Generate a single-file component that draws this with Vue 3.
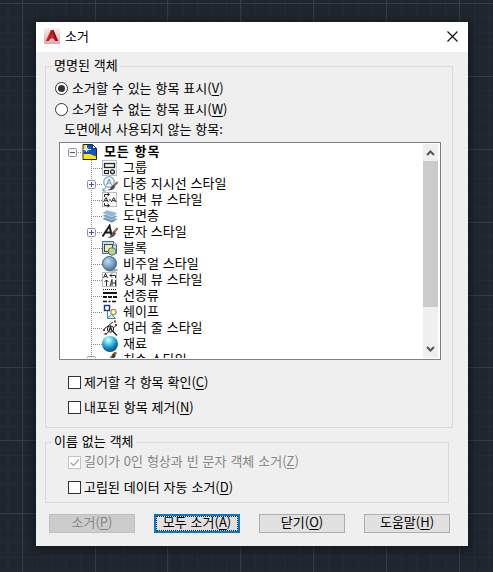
<script setup>
const tree = [
  { label: '그룹', icon: 'group' },
  { label: '다중 지시선 스타일', icon: 'mleader', expandable: true },
  { label: '단면 뷰 스타일', icon: 'section' },
  { label: '도면층', icon: 'layers' },
  { label: '문자 스타일', icon: 'text', expandable: true },
  { label: '블록', icon: 'block' },
  { label: '비주얼 스타일', icon: 'visual' },
  { label: '상세 뷰 스타일', icon: 'detail' },
  { label: '선종류', icon: 'linetype' },
  { label: '쉐이프', icon: 'shape' },
  { label: '여러 줄 스타일', icon: 'mline' },
  { label: '재료', icon: 'material' },
  { label: '치수 스타일', icon: 'dim', expandable: true },
]
const buttons = [
  { label: '소거', key: 'P', state: 'disabled' },
  { label: '모두 소거', key: 'A', state: 'focused' },
  { label: '닫기', key: 'O', state: '' },
  { label: '도움말', key: 'H', state: '' },
]
</script>

<template>
  <main class="canvas">
    <svg class="grid" width="493" height="572">
      <defs>
        <pattern id="minor" x="22" y="3" width="14.58" height="14.58" patternUnits="userSpaceOnUse">
          <path d="M.5 0V14.6M0 .5H14.6" stroke="#242b34" fill="none" />
        </pattern>
      </defs>
      <rect width="493" height="572" fill="#20262f" />
      <rect width="493" height="572" fill="url(#minor)" />
      <path d="M22.5 0V572M95.5 0V572M167.5 0V572M240.5 0V572M313.5 0V572M386.5 0V572M459.5 0V572M0 3.5H493M0 76.5H493M0 149.5H493M0 222.5H493M0 295.5H493M0 367.5H493M0 440.5H493M0 513.5H493" stroke="#343c45" />
    </svg>
    <section class="dialog">
      <header class="titlebar">
        <svg class="logo" width="16" height="16" viewBox="0 0 16 16">
          <defs>
            <linearGradient id="lg" x1="0" y1="0" x2="0" y2="1"><stop stop-color="#f4f1f1" /><stop offset="1" stop-color="#dda9ad" /></linearGradient>
          </defs>
          <rect width="16" height="16" fill="url(#lg)" />
          <path d="M7 2H9.5L14 13H11L9.5 10.5H6.3L4.8 13H2Z" fill="#b71920" />
          <path d="M7 2L5.5 8 2.5 13H2ZM8.2 5.5L9.8 9.5H6.8Z" fill="#d8332f" />
          <path d="M9.5 2L14 13H12L8.5 4Z" fill="#8f1118" />
        </svg>
        <h1>소거</h1>
        <svg class="close" width="11" height="11" viewBox="0 0 11 11"><path d="M.5 .5L10.5 10.5M10.5 .5L.5 10.5" stroke="#111" stroke-width="1.2" /></svg>
      </header>

      <fieldset class="box named">
        <legend>명명된 객체</legend>
        <label class="option radio"><i class="dot on"></i><span>소거할 수 있는 항목 표시(<u>V</u>)</span></label>
        <label class="option radio"><i class="dot"></i><span>소거할 수 없는 항목 표시(<u>W</u>)</span></label>
        <p class="caption">도면에서 사용되지 않는 항목:</p>
        <div class="list">
          <div class="tree">
            <div class="row root">
              <svg class="pm" width="9" height="9" viewBox="0 0 9 9"><rect x=".5" y=".5" width="8" height="8" rx="1" fill="#f7f7f7" stroke="#969696" /><path d="M2 4.5H7" stroke="#3b55a5" /></svg>
              <i class="stub"></i>
              <svg class="icon" width="16" height="16" viewBox="0 0 16 16">
                <path d="M1 .5H10.5L14.5 4.5V15.5H1Z" fill="#ffe600" stroke="#222" />
                <path d="M5 1H10.5L14 4.5V11.5L5 6Z" fill="#0750d2" />
                <path d="M1.5 6H6L14 11.5V12.5L8 10H1.5Z" fill="#0d4cc4" />
                <path d="M10.5 .5V4.5H14.5Z" fill="#fff" stroke="#333" />
                <path d="M4.5 2V8M1.5 5.5H9" stroke="#fff" stroke-width="1" />
                <path d="M2.5 3.5L6.5 7.5M6.5 3.5L2.5 7.5" stroke="#a9e2ff" stroke-width=".8" />
              </svg>
              <strong>모든 항목</strong>
            </div>
            <div v-for="item in tree" :key="item.icon" class="row child">
              <svg class="pm" width="9" height="9" viewBox="0 0 9 9">
                <template v-if="item.expandable"><rect x=".5" y=".5" width="8" height="8" rx="1" fill="#f7f7f7" stroke="#969696" /><path d="M2 4.5H7M4.5 2V7" stroke="#3b55a5" /></template>
                <path v-else d="M4 4.5H9" stroke="#888" stroke-dasharray="1 1" />
              </svg>
              <i class="stub"></i>
              <svg class="icon" width="16" height="16" viewBox="0 0 16 16">
                <g v-if="item.icon === 'group'" fill="none">
                  <rect x=".5" y=".5" width="14" height="15" stroke="#547da9" stroke-dasharray="1 1" />
                  <rect x="2.5" y="3.5" width="10" height="4" fill="#eef0f4" stroke="#222" stroke-width="1.3" />
                  <rect x="2.5" y="10.5" width="4" height="3" fill="#fff" stroke="#222" stroke-width="1.2" />
                  <circle cx="10.5" cy="11.8" r="2" fill="#dce6f3" stroke="#222" stroke-width="1.2" />
                </g>
                <g v-else-if="item.icon === 'mleader'" fill="none">
                  <circle cx="7" cy="6" r="5.3" fill="#edf6fb" stroke="#81aabd" stroke-width="1.2" />
                  <path d="M4.5 9L7 3L9.5 9M5.3 7H8.7M4 11L1 15M1 12V15H4" stroke="#6b96b0" />
                  <path d="M15.5 6L11 11" stroke="#9a6548" stroke-width="2" /><path d="M11.5 9L13 11Q11 15 5 14Q9 13 9 11Z" fill="#4b4b50" />
                </g>
                <g v-else-if="item.icon === 'section'" fill="none">
                  <rect x=".5" y=".5" width="14" height="14" fill="#fafafa" stroke="#bbb" />
                  <path d="M2.5 5V2.5H7M5.5 .8L7.5 2.5 5.5 4.2M2.5 11V13.5H7M5.5 11.8L7.5 13.5 5.5 15.2M1.5 10L4 5.5 6.2 10M2.5 8.7H5.5M7 8H9M9.3 10L11.7 5.5 14 10M10.3 8.7H13" stroke="#26282b" />
                </g>
                <g v-else-if="item.icon === 'layers'" stroke="#fff" stroke-width=".5">
                  <path d="M0 11L5 8 16 11 10 15Z" fill="#6a91b4" /><path d="M0 8L5 5 16 8 10 12Z" fill="#759fc1" /><path d="M0 5L5 2 16 5 10 9Z" fill="#91b6d2" />
                </g>
                <g v-else-if="item.icon === 'text'" fill="none">
                  <path d="M.5 12.5L7.5 1.8 9.8 12.5M3 8.5H8.8" stroke="#1c1c1c" stroke-width="2" />
                  <path d="M15.5 4L11.5 9" stroke="#a76949" stroke-width="2.2" /><path d="M11.5 7L14 9Q13 14 5 14Q10 12 10 9Z" fill="#55565b" />
                </g>
                <g v-else-if="item.icon === 'block'">
                  <path d="M.5 1.5H11.5L14.5 4.5V13.5H.5Z" fill="#c3daf1" stroke="#3c69ad" /><path d="M11.5 1.5V5H14.5" fill="#fff" stroke="#507dbd" />
                  <rect x="2.5" y="4.5" width="8" height="7" fill="#f1eda0" stroke="#444" /><circle cx="10" cy="11.5" r="3.8" fill="#bfd887" fill-opacity=".9" stroke="#626965" />
                </g>
                <g v-else-if="item.icon === 'visual'">
                  <defs><radialGradient id="vg" cx=".38" cy=".35" r=".7"><stop stop-color="#c3dff3" /><stop offset=".5" stop-color="#7faacd" /><stop offset="1" stop-color="#42709a" /></radialGradient></defs>
                  <ellipse cx="10" cy="14" rx="6" ry="1.7" fill="#aaa" /><circle cx="7.5" cy="7.5" r="7" fill="url(#vg)" stroke="#3b6687" />
                </g>
                <g v-else-if="item.icon === 'detail'" fill="none">
                  <rect x=".5" y=".5" width="14" height="14" fill="#fafafa" stroke="#bbb" />
                  <path d="M1.5 6L3.5 1.5 5.5 6M2.3 4.5H4.7M13.5 6V3.5H8M10 1.5L8 3.5 10 5.5M4.5 14V8M2.5 10L4.5 8 6.5 10M8 14L10 7.5V14M13.5 8V14M10 11H13.5" stroke="#2c2d2f" />
                </g>
                <g v-else-if="item.icon === 'linetype'" stroke="#151515" fill="none">
                  <path d="M1 1.5H15" stroke-dasharray="1 1" /><path d="M1 5H15" stroke-width="2" /><path d="M1 9H15" stroke-width="2" stroke-dasharray="4 1" /><path d="M1 13.5H15" stroke-width="1.5" stroke-dasharray="4 1.5 2 1.5" />
                </g>
                <g v-else-if="item.icon === 'shape'" fill="none">
                  <rect x="2.5" y="1.5" width="5" height="5" fill="#fff" stroke="#17348b" stroke-width="1.4" /><path d="M5.5 7V14.5H13.5L9.5 10.5 5.5 14" fill="#d9f2f0" stroke="#438e93" /><circle cx="11.5" cy="8" r="2.6" fill="#fff7ce" stroke="#a39443" stroke-width="1.2" />
                </g>
                <g v-else-if="item.icon === 'mline'" fill="none" stroke="#222">
                  <path d="M1.5 9.5L11 2M4 14L14 5.5" /><circle cx="8.5" cy="9" r="3.2" fill="#e9eef0" /><path d="M7 11L8.5 7L10 11M10.5 11L15 15.5" stroke-width="1.4" /><path d="M1 10H3M12 1.5H14M13 5H15M2.5 14H4.5" stroke="#982f2d" stroke-width="2" />
                </g>
                <g v-else-if="item.icon === 'material'">
                  <defs><radialGradient id="mg" cx=".4" cy=".25" r=".8"><stop stop-color="#f3ffff" /><stop offset=".3" stop-color="#61d5e8" /><stop offset=".65" stop-color="#1683ba" /><stop offset="1" stop-color="#054582" /></radialGradient></defs>
                  <circle cx="8" cy="8" r="8" fill="url(#mg)" />
                </g>
                <g v-else fill="none"><path d="M14 0L7 9" stroke="#966b3d" stroke-width="3" /><path d="M11 1L14 4L9 9Z" fill="#493629" /></g>
              </svg>
              <span>{{ item.label }}</span>
            </div>
          </div>
          <div class="scroll">
            <svg width="15" height="17" viewBox="0 0 15 17"><path d="M4 11L7.5 7.5 11 11" fill="none" stroke="#555" stroke-width="2" /></svg>
            <div class="track"><div class="thumb"></div></div>
            <svg width="15" height="17" viewBox="0 0 15 17"><path d="M4 6L7.5 9.5 11 6" fill="none" stroke="#555" stroke-width="2" /></svg>
          </div>
        </div>
        <label class="option check first"><i class="square"></i><span>제거할 각 항목 확인(<u>C</u>)</span></label>
        <label class="option check"><i class="square"></i><span>내포된 항목 제거(<u>N</u>)</span></label>
      </fieldset>

      <fieldset class="box unnamed">
        <legend>이름 없는 객체</legend>
        <label class="option check off"><i class="square"><svg width="11" height="11" viewBox="0 0 11 11"><path d="M1.5 5.5L4.5 8.5 10 2.5" fill="none" stroke="#aaa" stroke-width="1.4" /></svg></i><span>길이가 0인 형상과 빈 문자 객체 소거(<u>Z</u>)</span></label>
        <label class="option check last"><i class="square"></i><span>고립된 데이터 자동 소거(<u>D</u>)</span></label>
      </fieldset>

      <footer class="buttons">
        <button v-for="b in buttons" :key="b.key" :class="b.state"><span>{{ b.label }}(<u>{{ b.key }}</u>)</span></button>
      </footer>
    </section>
  </main>
</template>

<style>
body { margin: 0; overflow: hidden; }
</style>

<style scoped>
* { box-sizing: border-box; }
.canvas { display: grid; width: 493px; height: 572px; overflow: hidden; color: #000; font: 13px/16px "Noto Sans CJK KR", sans-serif; word-spacing: 1px; white-space: nowrap; }
.grid, .dialog { grid-area: 1 / 1; }
.grid { display: block; }
.dialog { width: 432px; height: 524px; margin: 22px 0 0 36px; background: #efefef; box-shadow: 0 2px 9px 2px rgba(10, 15, 20, .6); display: flex; flex-direction: column; z-index: 1; }
.titlebar { height: 30px; flex: none; background: #fff; display: flex; align-items: center; padding: 0 10px 2px 8px; }
h1 { margin: 0 auto 0 5px; font-size: 13px; font-weight: 400; }
.box { margin: 0 0 0 9px; padding: 0; border: 1px solid #dadada; min-width: 0; flex: none; }
legend { height: 16px; line-height: 14px; padding: 0 2px; margin-left: 6px; }
.named { width: 408px; height: 370px; margin-top: 6px; }
.unnamed { width: 404px; height: 69px; margin-top: 6px; }
.option { display: flex; align-items: center; height: 21px; }
.option span { padding-bottom: 2px; }
.radio { padding-left: 9px; gap: 4px; }
.radio:nth-of-type(1) { margin-top: 4px; }
.dot { width: 13px; height: 13px; border: 1px solid #333; border-radius: 50%; background: #fff; display: grid; place-items: center; }
.on::after { content: ""; width: 7px; height: 7px; border-radius: 50%; background: #333; }
u { text-decoration-thickness: 1px; text-underline-offset: 2px; }
.caption { margin: 1px 0 0 18px; height: 21px; line-height: 16px; }
.list { display: flex; justify-content: space-between; width: 382px; height: 218px; margin-left: 13px; border: 1px solid #7d8086; background: #fff; padding: 1px 2px 1px 8px; }
.tree { height: 214px; overflow: hidden; }
.row { display: flex; align-items: center; height: 16px; }
.child { padding-left: 19px; background: repeating-linear-gradient(#888 0 1px, transparent 1px 2px) 23px 0 / 1px 16px no-repeat; }
.row span, .row strong { padding-bottom: 3px; }
.row strong { letter-spacing: .9px; }
.pm, .icon { display: block; flex: none; }
.icon { margin-right: 5px; }
.root .icon { margin-right: 6px; }
.stub { width: 6px; height: 1px; background: repeating-linear-gradient(90deg, transparent 0 1px, #888 1px 2px); }
.root .stub { width: 5px; }
.scroll { width: 15px; display: flex; flex-direction: column; background: #efefef; }
.scroll svg { display: block; flex: none; }
.track { flex: 1; }
.thumb { height: 146px; background: #cbcbcb; }
.check { padding-left: 22px; gap: 3px; height: 25px; }
.first { margin-top: 10px; }
.square { display: block; width: 13px; height: 13px; border: 1px solid #333; background: #fff; }
.square svg { display: block; }
.off { color: #858585; height: 24px; }
.off .square { border-color: #c3c3c3; }
.last { height: 26px; }
.last span { padding-bottom: 0; }
.buttons { display: flex; gap: 19px; padding: 11px 0 0 13px; }
button { width: 86px; height: 19px; padding: 0 0 3px; border: 1px solid #adadad; background: #e1e1e1; color: #000; font: inherit; line-height: 14px; word-spacing: inherit; display: flex; align-items: center; justify-content: center; }
.disabled { background: #cccccc; border-color: #bfbfbf; color: #858585; }
.focused { border: 2px solid #0878cd; outline: 1px dotted #222; outline-offset: -3px; padding-bottom: 3px; }
</style>
